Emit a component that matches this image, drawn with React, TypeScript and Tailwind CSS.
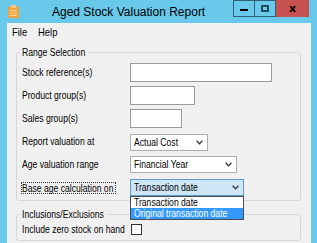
const body = "font-['Liberation_Sans',Arial,sans-serif] text-[10.5px] text-black";

// the screenshot's dialog font is narrower than Arial, so squeeze it a little
const T = ({ children }: { children: React.ReactNode }) => (
    <span className="inline-block origin-left scale-x-[0.82] whitespace-nowrap">{children}</span>
)

const Chevron = () => (
    <svg width="7" height="5" viewBox="0 0 7 5" className="shrink-0">
        <path d="M0.6 0.8 3.5 3.8 6.4 0.8" fill="none" stroke="#3a3a3a" strokeWidth="1.3" />
    </svg>
)

const TextBox = ({ width }: { width: string }) => (
    <div className={`h-[19px] border border-[#9a9a9a] bg-white ${width}`} />
)

const Combo = ({ value, width, focused }: { value: string, width: string, focused?: boolean }) => (
    <div
        className={`flex h-[17px] items-center justify-between border pl-[3px] pr-[4px] leading-[15px] ${width} ${focused ? "border-[#5b9bd5] bg-[#cfe6f7]" : "border-[#adadad] bg-white"}`}
    >
        <T>{value}</T>
        <Chevron />
    </div>
)

const TitleButtons = () => (
    <div className="flex h-[17px] self-start">
        <div className="flex w-[22px] items-end justify-center border border-[#2f5f78] pb-[5px]">
            <div className="h-[2px] w-[8px] bg-black" />
        </div>
        <div className="flex w-[21px] items-center justify-center border border-l-0 border-[#2f5f78]">
            <div className="h-[7px] w-[8px] border-2 border-[#1f4a60]" />
        </div>
        <div className="flex w-[33px] items-center justify-center bg-[#c75050] text-[11px] font-bold leading-none text-black font-['DejaVu_Sans',sans-serif]">
            x
        </div>
    </div>
)

export default function App() {
    return (
        <div className="flex h-[243px] w-[317px] flex-col overflow-hidden bg-[#68c9ea]">
            {/* window title bar */}
            <div className="flex h-[23px] shrink-0 items-center">
                <svg width="11" height="13" viewBox="0 0 11 13" className="ml-[8px] mt-[-1px]">
                    <rect x="0" y="1.5" width="11" height="11.5" rx="1" fill="#f2a23a" />
                    <rect x="3" y="0" width="5" height="3" rx="0.5" fill="#f8c57c" />
                    <path d="M2 5.5h7M2 8h7M2 10.5h7" stroke="#fbd9a6" strokeWidth="1" />
                </svg>
                <span className="ml-[33px] font-['Liberation_Sans',Arial,sans-serif] text-[12px] text-black">
                    Aged Stock Valuation Report
                </span>
                <div className="flex-1" />
                <div className="mr-[8px] self-start">
                    <TitleButtons />
                </div>
            </div>

            {/* client area */}
            <div className={`ml-[7px] mr-[6px] flex-1 bg-[#f0f0f0] ${body}`}>
                <div className="flex h-[19px] items-center pl-[5px] text-[11.5px]">
                    <span className="w-[26px]"><T>File</T></span>
                    <T>Help</T>
                </div>

                <fieldset className="ml-[9px] mt-[4px] w-[285px] rounded-[3px] border border-[#d8d8d8] pb-[1px] pl-[5px] pt-[2px]">
                    <legend className="-ml-[2px] w-[68px] px-[2px] leading-[13px]"><T>Range Selection</T></legend>
                    <div className="grid grid-cols-[108px_1fr] auto-rows-[23px] items-center">
                        <T>Stock reference(s)</T>
                        <TextBox width="w-[142px]" />
                        <T>Product group(s)</T>
                        <TextBox width="w-[65px]" />
                        <T>Sales group(s)</T>
                        <TextBox width="w-[52px]" />
                        <div className="pt-[1px]"><T>Report valuation at</T></div>
                        <div className="pt-[1px]">
                            <Combo value="Actual Cost" width="w-[78px]" />
                        </div>
                        <T>Age valuation range</T>
                        <Combo value="Financial Year" width="w-[107px]" />
                        <div className="-ml-[1px] flex h-[12px] w-[95px] items-center border border-dotted border-[#333] leading-[10px]">
                            <T>Base age calculation on</T>
                        </div>
                        <div className="relative">
                            <Combo value="Transaction date" width="w-[114px]" focused />
                            <div className="absolute left-0 top-full z-10 w-[114px] border border-[#4d4d4d] bg-white leading-[11px]">
                                <div className="h-[11px] pl-[3px]"><T>Transaction date</T></div>
                                <div className="h-[11px] bg-[#3399ff] pl-[3px] text-white"><T>Original transaction date</T></div>
                            </div>
                        </div>
                    </div>
                </fieldset>

                <fieldset className="ml-[9px] mt-[7px] w-[285px] rounded-[3px] border border-[#d8d8d8] pb-[2px] pl-[5px]">
                    <legend className="-ml-[2px] w-[86px] px-[2px] leading-[13px]"><T>Inclusions/Exclusions</T></legend>
                    <div className="grid h-[17px] grid-cols-[109px_1fr] items-center">
                        <T>Include zero stock on hand</T>
                        <div className="h-[11px] w-[11px] border border-[#333] bg-white" />
                    </div>
                </fieldset>
            </div>
        </div>
    )
}
